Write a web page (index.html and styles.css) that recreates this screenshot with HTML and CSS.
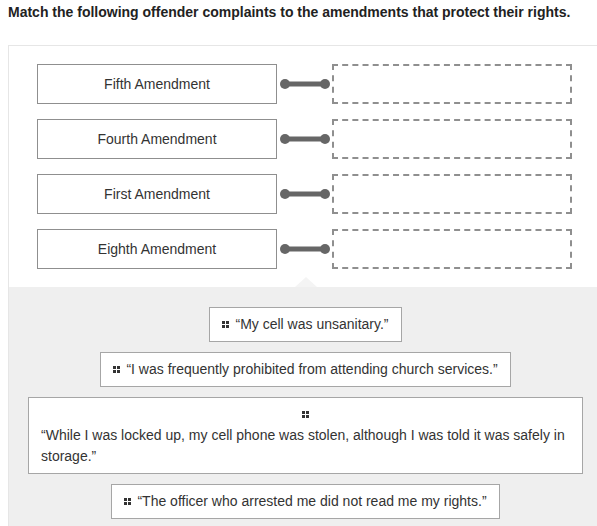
FILE: index.html
```html
<!DOCTYPE html>
<html lang="en">
<head>
    <meta charset="UTF-8">
    <meta name="viewport" content="width=device-width, initial-scale=1.0">
    <title>Matching</title>
    <link rel="stylesheet" href="styles.css">
</head>
<body>
    <p class="prompt">Match the following offender complaints to the amendments that protect their rights.</p>

    <div class="match">
        <div class="targets">
            <div class="row">
                <div class="label">Fifth Amendment</div>
                <svg class="link" width="55" height="40" viewBox="0 0 55 40"><line x1="8" y1="20" x2="48" y2="20"/><circle cx="8" cy="20" r="5"/><circle cx="48" cy="20" r="5"/></svg>
                <div class="drop"></div>
            </div>
            <div class="row">
                <div class="label">Fourth Amendment</div>
                <svg class="link" width="55" height="40" viewBox="0 0 55 40"><line x1="8" y1="20" x2="48" y2="20"/><circle cx="8" cy="20" r="5"/><circle cx="48" cy="20" r="5"/></svg>
                <div class="drop"></div>
            </div>
            <div class="row">
                <div class="label">First Amendment</div>
                <svg class="link" width="55" height="40" viewBox="0 0 55 40"><line x1="8" y1="20" x2="48" y2="20"/><circle cx="8" cy="20" r="5"/><circle cx="48" cy="20" r="5"/></svg>
                <div class="drop"></div>
            </div>
            <div class="row">
                <div class="label">Eighth Amendment</div>
                <svg class="link" width="55" height="40" viewBox="0 0 55 40"><line x1="8" y1="20" x2="48" y2="20"/><circle cx="8" cy="20" r="5"/><circle cx="48" cy="20" r="5"/></svg>
                <div class="drop"></div>
            </div>
        </div>

        <div class="pool">
            <div class="item"><span class="grip"><i></i><i></i><i></i><i></i></span><span class="text">&ldquo;My cell was unsanitary.&rdquo;</span></div>
            <div class="item"><span class="grip"><i></i><i></i><i></i><i></i></span><span class="text">&ldquo;I was frequently prohibited from attending church services.&rdquo;</span></div>
            <div class="item"><span class="grip"><i></i><i></i><i></i><i></i></span><span class="text">&ldquo;While I was locked up, my cell phone was stolen, although I was told it was safely in storage.&rdquo;</span></div>
            <div class="item"><span class="grip"><i></i><i></i><i></i><i></i></span><span class="text">&ldquo;The officer who arrested me did not read me my rights.&rdquo;</span></div>
        </div>
    </div>
</body>
</html>
```

FILE: styles.css
```css
html, body {
    overflow: hidden;
}
body {
    margin: 0;
    padding: 4px 8px;
    font-family: "Liberation Sans", Arial, sans-serif;
    color: #333;
    background-color: white;
}
.prompt {
    margin: 0 0 25px;
    font-size: 14px;
    line-height: 16px;
    font-weight: bold;
    color: #222;
}
.match {
    width: 593px;
    border-top: 1px solid #e6e6e6;
    border-left: 1px solid #e6e6e6;
}
.targets {
    display: flex;
    flex-direction: column;
    gap: 15px;
    padding: 18px 0 18px 28px;
}
.row {
    display: flex;
    align-items: center;
}
.label {
    width: 240px;
    height: 40px;
    box-sizing: border-box;
    border: 1px solid #8f8f8f;
    display: flex;
    align-items: center;
    justify-content: center;
    font-size: 14px;
}
.link line {
    stroke: #666;
    stroke-width: 5;
}
.link circle {
    fill: #666;
}
.drop {
    width: 240px;
    height: 40px;
    box-sizing: border-box;
    border: 2px dashed #8f8f8f;
}
.pool {
    position: relative;
    background-color: #efefef;
    padding: 20px 19px 12px;
    display: flex;
    flex-direction: column;
    align-items: center;
    gap: 10px;
}
.pool::before {
    content: "";
    position: absolute;
    top: -10px;
    left: 286px;
    border-left: 11px solid transparent;
    border-right: 11px solid transparent;
    border-bottom: 10px solid #f4f4f4;
}
.item {
    display: flex;
    flex-wrap: wrap;
    justify-content: center;
    align-items: center;
    column-gap: 6px;
    max-width: 100%;
    box-sizing: border-box;
    padding: 6px 12px;
    border: 1px solid #a6a6a6;
    background-color: white;
    font-size: 14px;
    line-height: 21px;
}
.grip {
    display: grid;
    grid-template-columns: 3px 3px;
    gap: 1px;
    height: 21px;
    align-content: center;
}
.grip i {
    width: 3px;
    height: 3px;
    background-color: #333;
}
.text {
    text-align: left;
}
```
